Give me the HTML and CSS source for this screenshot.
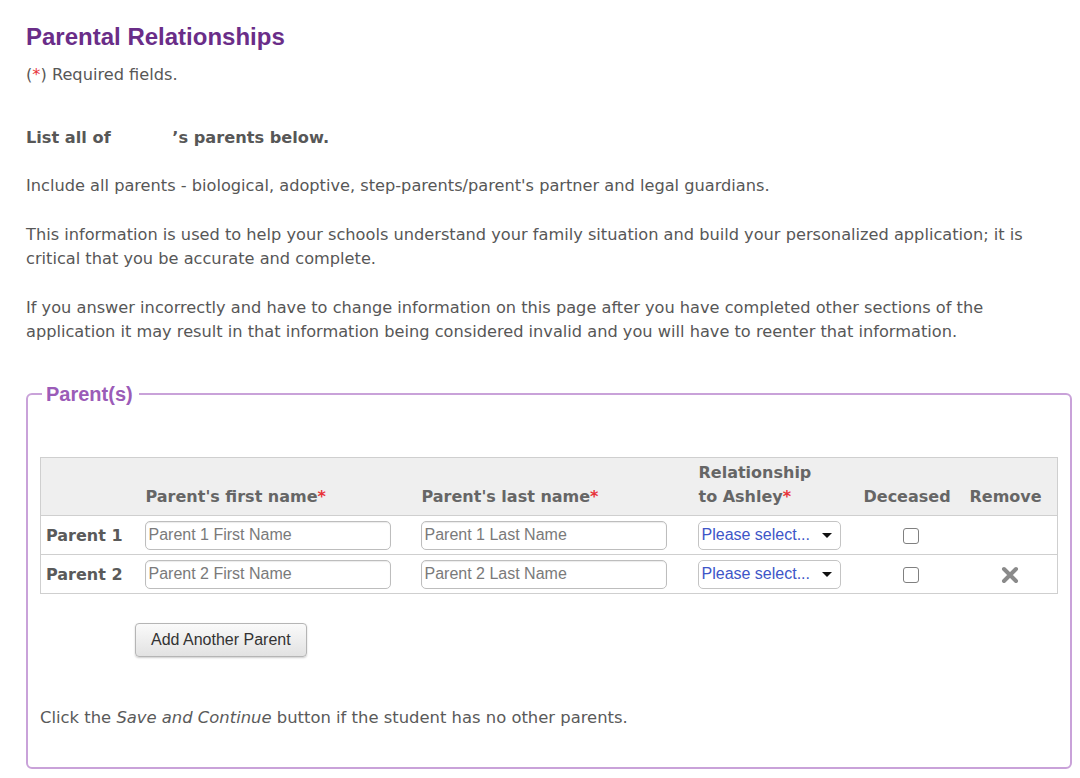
FILE: index.html
```html
<!DOCTYPE html>
<html>
<head>
<meta charset="utf-8">
<link rel="stylesheet" href="styles.css">
</head>
<body>
<div class="page">
  <h1 class="title">Parental Relationships</h1>
  <p class="required">(<span class="req">*</span>) Required fields.</p>
  <p class="lead">List all of <span class="blank"></span>’s parents below.</p>
  <p class="para">Include all parents - biological, adoptive, step-parents/parent's partner and legal guardians.</p>
  <p class="para">This information is used to help your schools understand your family situation and build your personalized application; it is critical that you be accurate and complete.</p>
  <p class="para">If you answer incorrectly and have to change information on this page after you have completed other sections of the application it may result in that information being considered invalid and you will have to reenter that information.</p>

  <fieldset class="box">
    <legend class="box-legend">Parent(s)</legend>
    <table class="parents">
      <colgroup>
        <col class="c1"><col class="c2"><col class="c3"><col class="c4"><col class="c5"><col class="c6">
      </colgroup>
      <thead>
        <tr>
          <th></th>
          <th>Parent's first name<span class="req">*</span></th>
          <th>Parent's last name<span class="req">*</span></th>
          <th>Relationship<br>to Ashley<span class="req">*</span></th>
          <th>Deceased</th>
          <th class="th-remove">Remove</th>
        </tr>
      </thead>
      <tbody>
        <tr>
          <td class="label">Parent 1</td>
          <td><input class="field" type="text" placeholder="Parent 1 First Name"></td>
          <td><input class="field" type="text" placeholder="Parent 1 Last Name"></td>
          <td><div class="select"><span>Please select...</span><span class="caret"></span></div></td>
          <td class="center"><span class="check"></span></td>
          <td class="center"></td>
        </tr>
        <tr>
          <td class="label">Parent 2</td>
          <td><input class="field" type="text" placeholder="Parent 2 First Name"></td>
          <td><input class="field" type="text" placeholder="Parent 2 Last Name"></td>
          <td><div class="select"><span>Please select...</span><span class="caret"></span></div></td>
          <td class="center"><span class="check"></span></td>
          <td class="center">
            <svg class="remove" width="18" height="18" viewBox="0 0 18 18"><path d="M3 3 L15 15 M15 3 L3 15" stroke="#8a8a8a" stroke-width="4" stroke-linecap="round"/></svg>
          </td>
        </tr>
      </tbody>
    </table>
    <div class="actions"><button class="btn" type="button">Add Another Parent</button></div>
    <p class="note">Click the <em>Save and Continue</em> button if the student has no other parents.</p>
  </fieldset>
</div>
</body>
</html>
```
FILE: styles.css
```css
html, body { margin: 0; padding: 0; background: #fff; }
.page {
  padding: 24px 8px 0 26px;
  font-family: "DejaVu Sans", Verdana, sans-serif;
  font-size: 16.2px;
  color: #575757;
}
.title {
  margin: 0;
  font-family: "Liberation Sans", Arial, sans-serif;
  font-size: 24px;
  line-height: 26px;
  font-weight: bold;
  color: #6a2d88;
}
.req { color: #e8333a; }
.required { margin: 13px 0 0; line-height: 24px; }
.lead { margin: 39px 0 0; line-height: 24px; font-weight: bold; }
.blank { display: inline-block; width: 56px; }
.para { margin: 24px 24px 0 0; line-height: 24px; }
.para + .para { margin-top: 25px; }
.box {
  margin: 38px 0 0;
  border: 2px solid #c9a2d9;
  border-radius: 6px;
  padding: 0 13px 37px 12px;
  min-width: 0;
}
.box-legend {
  margin-left: 2px;
  padding: 0 6px 0 4px;
  font-family: "Liberation Sans", Arial, sans-serif;
  font-size: 20px;
  font-weight: bold;
  line-height: 24px;
  color: #9b5cb8;
}
.parents {
  margin-top: 51px;
  width: 100%;
  border-collapse: collapse;
  border: 1px solid #cfcfcf;
  table-layout: fixed;
  font-size: 16px;
}
.c1 { width: 100px; } .c2 { width: 276px; } .c3 { width: 277px; }
.c4 { width: 165px; } .c5 { width: 105px; } .c6 { width: 94px; }
.parents th {
  background: #efefef;
  text-align: left;
  vertical-align: bottom;
  font-weight: bold;
  color: #666;
  line-height: 24px;
  padding: 0 5px 6px;
  height: 51px;
}
.parents th.th-remove { padding-left: 6px; }
.parents td {
  border-top: 1px solid #cfcfcf;
  padding: 0 5px;
  height: 38px;
  vertical-align: middle;
}
.parents .center { text-align: center; }
.parents td.label { font-weight: bold; color: #5a5a5a; padding-left: 5px; }
.field {
  box-sizing: border-box;
  width: 246px;
  height: 29px;
  margin: 0 0 0 -1px;
  border: 1px solid #bdbdbd;
  border-radius: 5px;
  padding: 0 3px;
  font-family: "Liberation Sans", Arial, sans-serif;
  font-size: 16px;
  color: #333;
  box-shadow: inset 0 1px 1px rgba(0,0,0,0.08);
}
.field::placeholder { color: #7a7a7a; }
.select {
  box-sizing: border-box;
  width: 143px;
  height: 29px;
  margin-left: -1px;
  border: 1px solid #c4c4c4;
  border-radius: 5px;
  display: flex;
  align-items: center;
  justify-content: space-between;
  padding: 0 8px 0 3px;
  font-family: "Liberation Sans", Arial, sans-serif;
  font-size: 16px;
  color: #3e56c8;
  background: #fff;
}
.caret {
  width: 0; height: 0;
  border-left: 5px solid transparent;
  border-right: 5px solid transparent;
  border-top: 5px solid #111;
}
.check {
  display: inline-block;
  width: 16px; height: 16px;
  border: 1px solid #808080;
  border-radius: 3px;
  vertical-align: middle;
  box-sizing: border-box;
  background: #fff;
}
.remove { vertical-align: middle; }
.actions { padding: 29px 0 0 95px; }
.btn {
  height: 34px;
  padding: 0 15px;
  font-family: "Liberation Sans", Arial, sans-serif;
  font-size: 16px;
  color: #333;
  border: 1px solid #b5b5b5;
  border-radius: 4px;
  background: linear-gradient(#fafafa, #e2e2e2);
  box-shadow: 0 1px 2px rgba(0,0,0,0.2);
}
.note {
  margin: 49px 0 0;
  font-size: 16.4px;
  line-height: 24px;
  color: #5a5a5a;
}
```
